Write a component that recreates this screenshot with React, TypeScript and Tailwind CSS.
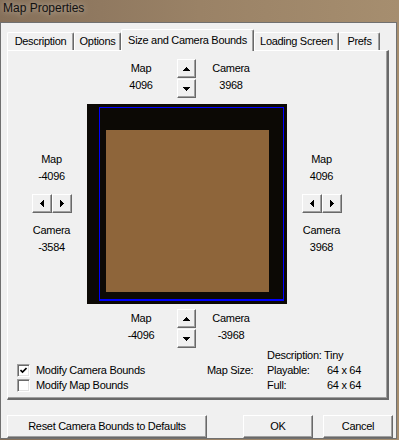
import React from "react";

const btn =
  "flex items-center justify-center bg-[#f0f0f0] border border-t-white border-l-white border-r-[#696969] border-b-[#696969] shadow-[inset_-1px_-1px_0_#a0a0a0]";

function Up() {
  return (
    <svg width="7" height="4" viewBox="0 0 7 4" shapeRendering="crispEdges">
      <polygon points="3.5,0 7,4 0,4" fill="#000" />
    </svg>
  );
}
function Down() {
  return (
    <svg width="7" height="4" viewBox="0 0 7 4" shapeRendering="crispEdges">
      <polygon points="0,0 7,0 3.5,4" fill="#000" />
    </svg>
  );
}
function Left() {
  return (
    <svg width="4" height="7" viewBox="0 0 4 7" shapeRendering="crispEdges">
      <polygon points="4,0 4,7 0,3.5" fill="#000" />
    </svg>
  );
}
function Right() {
  return (
    <svg width="4" height="7" viewBox="0 0 4 7" shapeRendering="crispEdges">
      <polygon points="0,0 0,7 4,3.5" fill="#000" />
    </svg>
  );
}

function Pair({ label, value }: { label: string; value: string }) {
  return (
    <div className="flex flex-col items-center leading-[17px]">
      <span>{label}</span>
      <span>{value}</span>
    </div>
  );
}

function VGroup({ map, cam }: { map: string; cam: string }) {
  return (
    <div className="ml-[97px] flex h-[39px]">
      <div className="w-[72px] pt-px">
        <Pair label="Map" value={map} />
      </div>
      <div className="flex flex-col gap-px">
        <div className={btn + " w-[19px] h-[19px]"}>
          <Up />
        </div>
        <div className={btn + " w-[19px] h-[19px]"}>
          <Down />
        </div>
      </div>
      <div className="w-[70px] pt-px">
        <Pair label="Camera" value={cam} />
      </div>
    </div>
  );
}

function HGroup({ map, cam, w }: { map: string; cam: string; w: string }) {
  return (
    <div className={"flex flex-col items-center pt-[47px] " + w}>
      <Pair label="Map" value={map} />
      <div className="mt-[9px] flex">
        <div className={btn + " w-[20px] h-[19px]"}>
          <Left />
        </div>
        <div className={btn + " w-[20px] h-[19px]"}>
          <Right />
        </div>
      </div>
      <div className="mt-[9px]">
        <Pair label="Camera" value={cam} />
      </div>
    </div>
  );
}

function Checkbox({ checked }: { checked?: boolean }) {
  return (
    <div className="w-[13px] h-[13px] bg-white border border-t-[#a0a0a0] border-l-[#a0a0a0] border-r-white border-b-white shadow-[inset_1px_1px_0_#696969,inset_-1px_-1px_0_#e3e3e3] flex items-center justify-center">
      {checked && (
        <svg width="7" height="7" viewBox="0 0 7 7">
          <polyline points="0.5,3 2.5,5 6.5,1" fill="none" stroke="#000" strokeWidth="1.6" />
        </svg>
      )}
    </div>
  );
}

function Tab({ label, w }: { label: string; w: string }) {
  return (
    <div
      className={
        "h-[18px] flex items-center justify-center rounded-t-[2px] border-t border-l border-r border-t-white border-l-white border-r-[#696969] shadow-[inset_-1px_0_0_#a0a0a0] " +
        w
      }
    >
      {label}
    </div>
  );
}

export default function App() {
  return (
    <div className="w-[399px] h-[440px] flex flex-col overflow-hidden bg-linear-to-r from-[#86705a] via-[#9a8266] to-[#a68e6f] font-['Liberation_Sans',Arial,sans-serif] text-[11px] tracking-[-0.3px] text-black">
      <div className="h-[22px] shrink-0 pl-[3px] leading-[16px] text-[12px] tracking-normal text-[#111] [text-shadow:0_0_6px_rgba(255,255,255,0.55)]">
        Map Properties
      </div>
      <div className="flex-1 mr-[2px] mb-[1px] border border-[#707070] bg-[#f0f0f0] flex flex-col">
        {/* tabs */}
        <div className="mt-[6px] ml-[6px] h-[21px] flex items-end">
          <Tab label="Description" w="w-[67px]" />
          <Tab label="Options" w="w-[47px]" />
          <div className="relative z-10 -mb-px h-[22px] w-[133px] flex items-center justify-center bg-[#f0f0f0] rounded-t-[2px] border-t border-l border-r border-t-white border-l-white border-r-[#696969] shadow-[inset_-1px_0_0_#a0a0a0]">
            Size and Camera Bounds
          </div>
          <Tab label="Loading Screen" w="w-[85px]" />
          <Tab label="Prefs" w="w-[41px]" />
        </div>
        {/* panel */}
        <div className="ml-[6px] w-[382px] h-[350px] shrink-0 border-t border-l border-t-white border-l-white border-r-2 border-b-2 border-r-[#696969] border-b-[#696969] shadow-[inset_-1px_-1px_0_#a0a0a0] pt-[8px] flex flex-col">
          <VGroup map="4096" cam="3968" />
          <div className="mt-[6px] ml-[8px] flex h-[200px]">
            <HGroup map="-4096" cam="-3584" w="w-[71px]" />
            <svg width="200" height="200" viewBox="0 0 200 200" shapeRendering="crispEdges">
              <rect x="0" y="0" width="200" height="200" fill="#0c0905" />
              <rect x="19" y="26" width="163" height="162" fill="#8e653a" />
              <rect x="12.5" y="3.5" width="184" height="192" fill="none" stroke="#0000ff" strokeWidth="1" />
              <line x1="12" y1="196.5" x2="197" y2="196.5" stroke="#0000ff" strokeWidth="1" />
            </svg>
            <HGroup map="4096" cam="3968" w="w-[69px]" />
          </div>
          <div className="mt-[5px]">
            <VGroup map="-4096" cam="-3968" />
          </div>
          <div className="flex">
            <div className="ml-[9px] w-[190px] pt-[15px] flex flex-col">
              <div className="h-[15px] flex items-center">
                <Checkbox checked />
                <span className="ml-[6px]">Modify Camera Bounds</span>
              </div>
              <div className="h-[15px] flex items-center">
                <Checkbox />
                <span className="ml-[6px]">Modify Map Bounds</span>
              </div>
            </div>
            <div className="grid grid-cols-[60px_60px_auto] leading-[15px]">
              <span className="col-start-2 col-span-2">Description: Tiny</span>
              <span>Map Size:</span>
              <span>Playable:</span>
              <span>64 x 64</span>
              <span className="col-start-2">Full:</span>
              <span>64 x 64</span>
            </div>
          </div>
        </div>
        {/* buttons */}
        <div className="mt-[15px] ml-[6px] h-[23px] flex">
          <div className={btn + " w-[200px] h-[23px]"}>Reset Camera Bounds to Defaults</div>
          <div className={btn + " ml-[36px] w-[70px] h-[23px]"}>OK</div>
          <div className={btn + " ml-[10px] w-[70px] h-[23px]"}>Cancel</div>
        </div>
      </div>
    </div>
  );
}
